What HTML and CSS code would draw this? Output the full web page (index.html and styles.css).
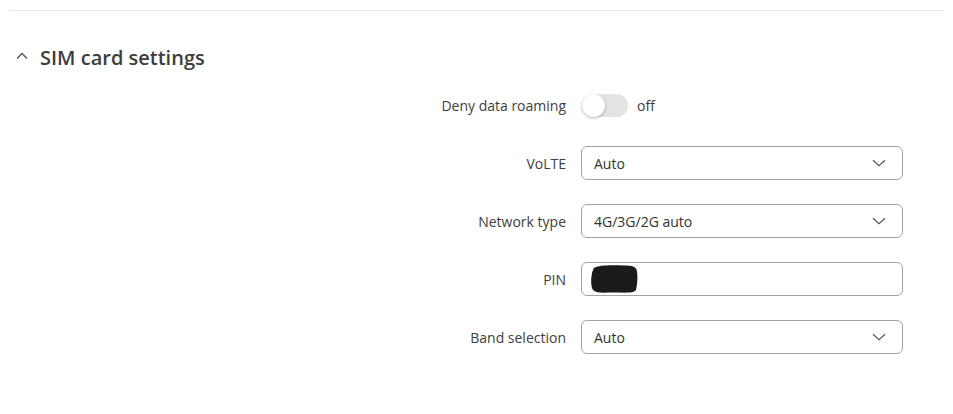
FILE: index.html
```html
<!DOCTYPE html>
<html>
<head>
<meta charset="utf-8">
<link rel="stylesheet" href="styles.css">
</head>
<body>
<div class="page">
  <div class="divider"></div>
  <div class="section-head">
    <svg class="chev-up" width="14" height="10" viewBox="0 0 14 10"><path d="M2 7.5 L7 2.5 L12 7.5" fill="none" stroke="#555" stroke-width="1.4"/></svg>
    <h2 class="title">SIM card settings</h2>
  </div>
  <div class="form">
    <label class="lbl">Deny data roaming</label>
    <div class="ctl toggle-wrap">
      <span class="toggle"><span class="knob"></span></span>
      <span class="state">off</span>
    </div>

    <label class="lbl">VoLTE</label>
    <div class="ctl"><div class="select"><span>Auto</span><svg class="chev" width="14" height="8" viewBox="0 0 14 8"><path d="M1 1.2 L7 6.6 L13 1.2" fill="none" stroke="#555" stroke-width="1.2"/></svg></div></div>

    <label class="lbl">Network type</label>
    <div class="ctl"><div class="select"><span>4G/3G/2G auto</span><svg class="chev" width="14" height="8" viewBox="0 0 14 8"><path d="M1 1.2 L7 6.6 L13 1.2" fill="none" stroke="#555" stroke-width="1.2"/></svg></div></div>

    <label class="lbl">PIN</label>
    <div class="ctl"><div class="input"><svg class="blob" width="50" height="30" viewBox="0 0 50 30"><path d="M4 4 C8 1 22 1 34 1.5 C42 1.5 47 2.5 47 8 C48 14 47 22 46 26 C44 29.5 34 28.5 24 28.5 C14 28.5 6 29.5 3 26 C0 22 1 8 4 4 Z" fill="#1a1a1a"/></svg></div></div>

    <label class="lbl">Band selection</label>
    <div class="ctl"><div class="select"><span>Auto</span><svg class="chev" width="14" height="8" viewBox="0 0 14 8"><path d="M1 1.2 L7 6.6 L13 1.2" fill="none" stroke="#555" stroke-width="1.2"/></svg></div></div>
  </div>
</div>
</body>
</html>
```

FILE: styles.css
```css
html, body {
  margin: 0;
  padding: 0;
  background: #fff;
  font-family: "Open Sans", "Noto Sans", sans-serif;
  color: #404040;
}
.page {
  padding: 10px 10px 0 10px;
}
.divider {
  height: 1px;
  background: #e4e4e4;
}
.section-head {
  display: flex;
  align-items: center;
  margin-top: 33px;
  padding-left: 5px;
  height: 28px;
}
.chev-up {
  margin-right: 11px;
  margin-top: -4px;
}
.title {
  margin: 0;
  font-size: 20px;
  font-weight: 600;
  line-height: 28px;
  color: #3d3d3d;
}
.form {
  display: grid;
  grid-template-columns: 556px 322px;
  column-gap: 15px;
  row-gap: 24px;
  margin-top: 16px;
  grid-auto-rows: 34px;
}
.lbl {
  font-size: 14px;
  text-align: right;
  align-self: center;
  color: #404040;
}
.ctl {
  display: flex;
  align-items: center;
}
.toggle-wrap {
  gap: 9px;
}
.toggle {
  position: relative;
  width: 46px;
  height: 23px;
  border-radius: 12px;
  background: #e3e3e3;
  margin-left: 1px;
}
.knob {
  position: absolute;
  left: 0;
  top: 0;
  width: 23px;
  height: 23px;
  border-radius: 50%;
  background: #fff;
  box-shadow: 0 1px 3px rgba(0,0,0,0.3);
}
.state {
  font-size: 14px;
  color: #404040;
}
.select, .input {
  box-sizing: border-box;
  width: 322px;
  height: 34px;
  border: 1px solid #a3a3a3;
  border-radius: 6px;
  display: flex;
  align-items: center;
  padding: 0 16px 0 12px;
  font-size: 14px;
  color: #333;
}
.select span {
  flex: 1;
}
.input {
  padding-left: 8px;
}
.blob {
  display: block;
}
```
